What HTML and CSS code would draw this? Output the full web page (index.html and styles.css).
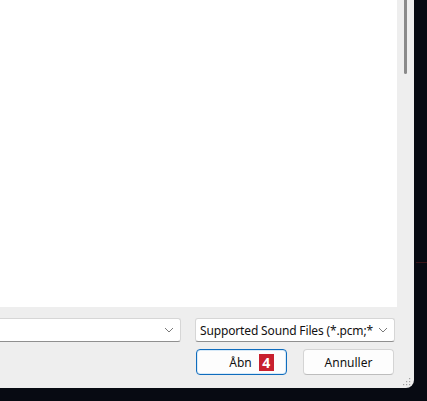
FILE: index.html
```html
<!DOCTYPE html>
<html>
<head>
<meta charset="utf-8">
<link rel="stylesheet" href="styles.css">
</head>
<body>
<div class="dialog">
  <div class="top">
    <div class="list"></div>
    <div class="scroll"><div class="thumb"></div></div>
  </div>
  <div class="bottom">
    <div class="row combos">
      <div class="combo name"><span class="text"></span>
        <svg class="chev" width="10" height="6" viewBox="0 0 10 6"><path d="M1 1 L5 5 L9 1" fill="none" stroke="#7a7a7a" stroke-width="1"/></svg>
      </div>
      <div class="combo filter"><span class="text">Supported Sound Files (*.pcm;*</span>
        <svg class="chev" width="10" height="6" viewBox="0 0 10 6"><path d="M1 1 L5 5 L9 1" fill="none" stroke="#7a7a7a" stroke-width="1"/></svg>
      </div>
    </div>
    <div class="row buttons">
      <div class="btn primary">Åbn <span class="badge">4</span></div>
      <div class="btn">Annuller</div>
    </div>
  </div>
  <div class="grip">
    <svg width="8" height="8" viewBox="0 0 8 8"><g fill="#a0a0a0"><rect x="6" y="0" width="1.2" height="1.2"/><rect x="3" y="3" width="1.2" height="1.2"/><rect x="6" y="3" width="1.2" height="1.2"/><rect x="0" y="6" width="1.2" height="1.2"/><rect x="3" y="6" width="1.2" height="1.2"/><rect x="6" y="6" width="1.2" height="1.2"/></g></svg>
  </div>
</div>
<div class="redline"></div>
</body>
</html>
```
FILE: styles.css
```css
html, body {
  margin: 0;
  padding: 0;
  background: #070a12;
  width: 427px;
  height: 401px;
  overflow: hidden;
  font-family: "Noto Sans", "Open Sans", sans-serif;
  font-size: 12px;
  color: #111111;
}
.dialog {
  position: relative;
  width: 414px;
  height: 388px;
  background: #eeeeee;
  border-bottom-right-radius: 8px;
  display: flex;
  flex-direction: column;
}
.top {
  display: flex;
  height: 307px;
}
.list {
  width: 397px;
  background: #ffffff;
}
.scroll {
  flex: 1;
  background: #eeeeee;
  display: flex;
  justify-content: center;
  padding-right: 1px;
}
.thumb {
  width: 3px;
  height: 74px;
  margin-left: 1px;
  background: #8a8a8a;
  border-radius: 0 0 2px 2px;
}
.bottom {
  display: flex;
  flex-direction: column;
  padding-top: 11px;
  gap: 7px;
}
.row { display: flex; }
.combos { gap: 14px; }
.combo {
  box-sizing: border-box;
  height: 24px;
  background: #ffffff;
  border: 1px solid #d6d6d6;
  border-bottom-color: #8f8f8f;
  border-radius: 3px;
  display: flex;
  align-items: center;
  justify-content: space-between;
  padding: 0 6px 0 4px;
}
.name {
  width: 182px;
  margin-left: -1px;
  border-radius: 0 3px 3px 0;
}
.filter { width: 200px; }
.text { white-space: nowrap; letter-spacing: -0.15px; }
.chev { flex-shrink: 0; }
.buttons {
  justify-content: flex-end;
  gap: 16px;
  padding-right: 20px;
}
.btn {
  box-sizing: border-box;
  width: 91px;
  height: 26px;
  background: #fdfdfd;
  border: 1px solid #d4d4d4;
  border-bottom-color: #bdbdbd;
  border-radius: 4px;
  display: flex;
  align-items: center;
  justify-content: center;
  gap: 7px;
}
.primary {
  padding-left: 20px;
  border: 1px solid #0f6cbd;
  box-shadow: inset 0 0 0 1px #d8eaf8;
}
.badge {
  background: #c8202e;
  color: #ffffff;
  font-weight: 700;
  font-size: 14px;
  line-height: 17px;
  width: 15px;
  height: 17px;
  text-align: center;
}
.grip {
  position: absolute;
  right: 3px;
  bottom: 2px;
  line-height: 0;
}
.redline {
  position: absolute;
  left: 416px;
  top: 262px;
  width: 11px;
  height: 1px;
  background: #3a1418;
}
```
